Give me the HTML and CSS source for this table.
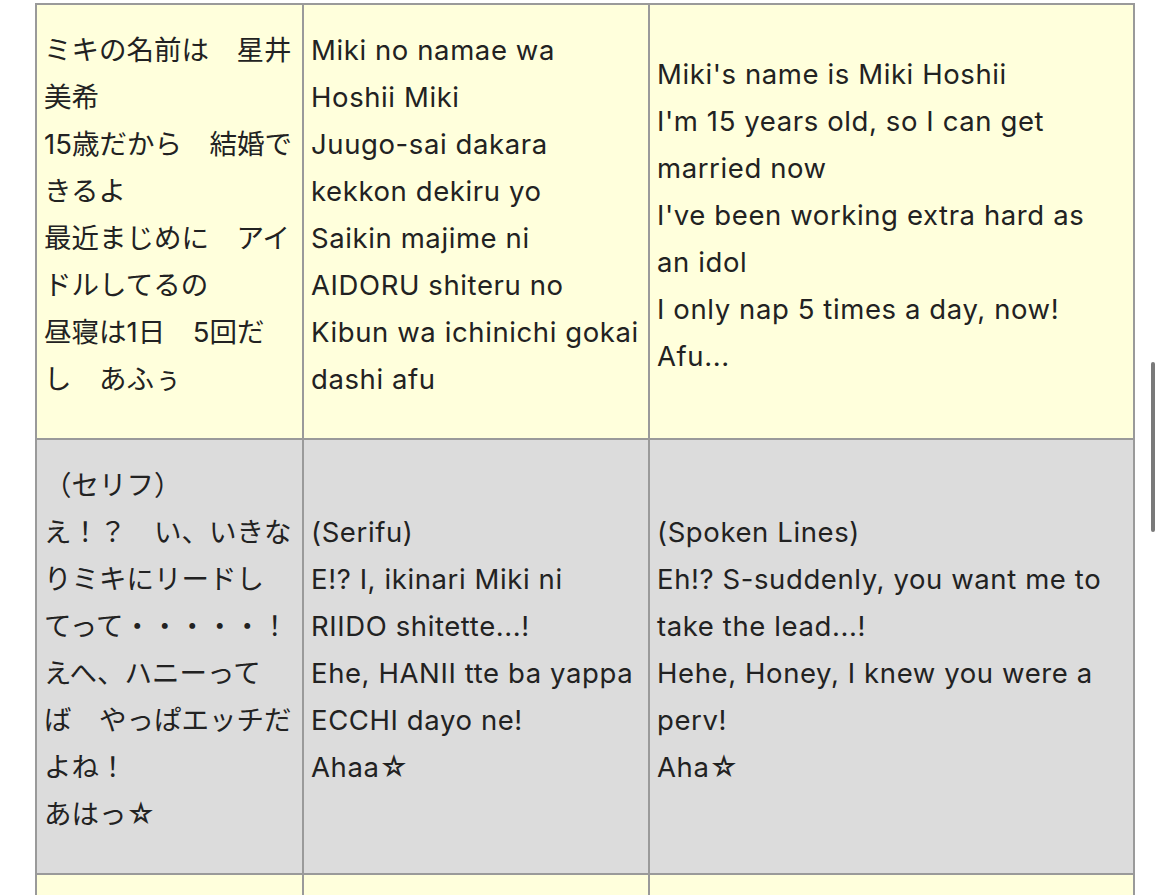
FILE: index.html
```html
<!DOCTYPE html>
<html lang="ja">
<head>
<meta charset="utf-8">
<title>Lyrics</title>
<link rel="stylesheet" href="styles.css">
</head>
<body>
<table class="lyrics">
  <colgroup>
    <col class="c-ja">
    <col class="c-ro">
    <col class="c-en">
  </colgroup>
  <tr class="row-y">
    <td class="ja">ミキの名前は　星井<br>美希<br>15歳だから　結婚で<br>きるよ<br>最近まじめに　アイ<br>ドルしてるの<br>昼寝は1日　5回だ<br>し　あふぅ</td>
    <td class="lat">Miki no namae wa<br>Hoshii Miki<br>Juugo-sai dakara<br>kekkon dekiru yo<br>Saikin majime ni<br>AIDORU shiteru no<br>Kibun wa ichinichi gokai<br>dashi afu</td>
    <td class="lat">Miki's name is Miki Hoshii<br>I'm 15 years old, so I can get<br>married now<br>I've been working extra hard as<br>an idol<br>I only nap 5 times a day, now!<br>Afu...</td>
  </tr>
  <tr class="row-g">
    <td class="ja">（セリフ）<br>え！？　い、いきな<br>りミキにリードし<br>てって・・・・・！<br>えへ、ハニーって<br>ば　やっぱエッチだ<br>よね！<br>あはっ☆</td>
    <td class="lat">(Serifu)<br>E!? I, ikinari Miki ni<br>RIIDO shitette...!<br>Ehe, HANII tte ba yappa<br>ECCHI dayo ne!<br>Ahaa☆</td>
    <td class="lat">(Spoken Lines)<br>Eh!? S-suddenly, you want me to<br>take the lead...!<br>Hehe, Honey, I knew you were a<br>perv!<br>Aha☆</td>
  </tr>
  <tr class="row-y">
    <td>&nbsp;</td>
    <td>&nbsp;</td>
    <td>&nbsp;</td>
  </tr>
</table>
<div class="scroll-indicator"></div>
</body>
</html>
```

FILE: styles.css
```css
html, body {
  margin: 0;
  padding: 0;
  background: #ffffff;
  overflow: hidden;
}

body {
  padding: 3px 0 0 35px;
  font-family: "Inter", "Noto Sans CJK JP", sans-serif;
  font-size: 27.5px;
  line-height: 47px;
  color: #222222;
}

.lyrics {
  border-collapse: collapse;
  width: 1098px;
  table-layout: fixed;
}

.c-ja { width: 267px; }
.c-ro { width: 346px; }
.c-en { width: 485px; }

.lyrics td {
  border: 2px solid #9a9a9a;
  padding: 22px 7px 35px 7px;
  vertical-align: middle;
  white-space: nowrap;
  overflow: hidden;
}

.lyrics td.lat {
  letter-spacing: 0.6px;
}

.row-y td { background: #ffffdc; }
.row-g td { background: #dcdcdc; }

.scroll-indicator {
  position: fixed;
  right: 0;
  top: 362px;
  width: 4px;
  height: 170px;
  border-radius: 2px;
  background: #7a7a7a;
}
```
